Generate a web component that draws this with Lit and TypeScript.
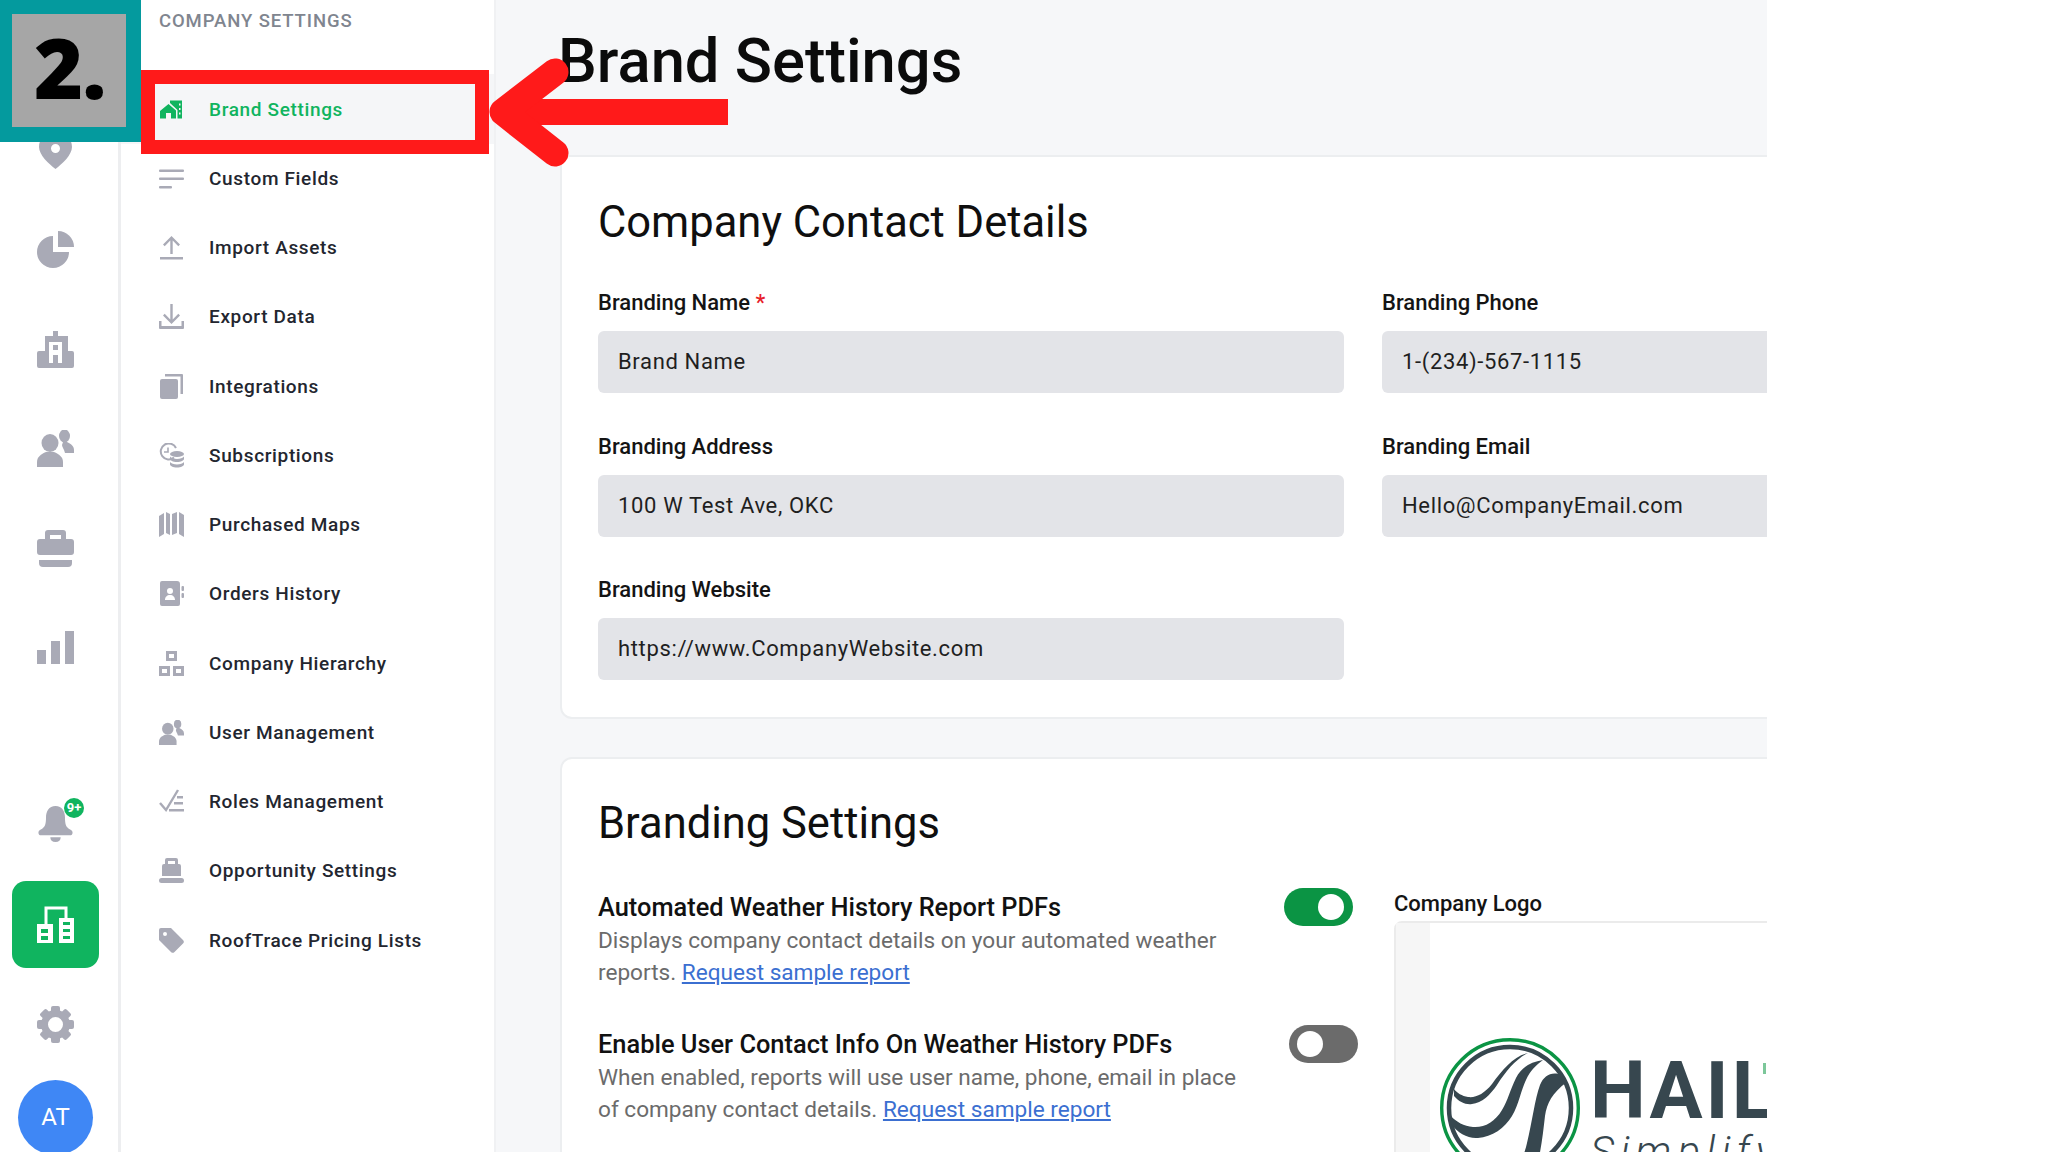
import { LitElement, html, svg, css } from 'lit';
import { customElement } from 'lit/decorators.js';

const G = '#a9aab6';

const usersIcon = svg`<ellipse cx="13" cy="13" rx="8.500" ry="9"/><path d="M0 37v-5c0-5 4-8 9-10h8c5 2 9 5 9 10v5z"/><ellipse cx="27.500" cy="6" rx="5.500" ry="6.500"/><path d="M26 12h4c4 2 7 4 7 8v3h-9c-1-4-3-6-3-8z"/>`;

const railIcons = {
  pin: svg`<path fill-rule="evenodd" d="M18.5 0C8 0 2 7 2 15c0 8 10 17 16.5 22C25 32 35 23 35 15 35 7 29 0 18.5 0zm0 12a4.5 4.5 0 1 1 0 9 4.5 4.5 0 0 1 0-9z"/>`,
  pie: svg`<path d="M16 5A16 16 0 1 0 32 21H16z"/><path d="M21 0a16 16 0 0 1 16 16H21z"/>`,
  building: svg`<path fill-rule="evenodd" d="M16 0h5v5h10v15h4a2 2 0 0 1 2 2v13a2 2 0 0 1-2 2H2a2 2 0 0 1-2-2V22a2 2 0 0 1 2-2h6V5h8zM12 11v21h4v-8h5v8h4V11zm4 3h5v5h-5z"/>`,
  users: usersIcon,
  case: svg`<path fill-rule="evenodd" d="M11 0h15a3 3 0 0 1 3 3v6h5a3 3 0 0 1 3 3v10a3 3 0 0 1-3 3H3a3 3 0 0 1-3-3V12a3 3 0 0 1 3-3h5V3a3 3 0 0 1 3-3zm2 5v4h11V5z"/><path d="M2 30h33v3a4 4 0 0 1-4 4H6a4 4 0 0 1-4-4z"/>`,
  bars: svg`<rect y="21" width="9" height="14"/><rect x="14" y="12" width="9" height="23"/><rect x="28" y="2" width="9" height="33"/>`,
  bell: svg`<path d="M18.5 1c-7 0-10 6-10 12 0 7-1 10-4 12-2 1-4 2-4 4 0 2 1 3 3 3h30c2 0 3-1 3-3 0-2-2-3-4-4-3-2-4-5-4-12 0-6-3-12-10-12z"/><path d="M13 34h11c0 3-2 5-5.500 5S13 37 13 34z"/>`,
};

const teeth = [0, 45, 90, 135, 180, 225, 270, 315];

const navIcons = {
  brand: svg`<path d="M1 14 9.500 7 17 13.500v8h-5V16H7v5.500H1z"/><path fill-rule="evenodd" d="M11 3.500h12v18h-4.500V13L11 6zM20 6.500v2h1.500v-2zm0 4.500v2h1.500v-2zm0 4.500v2h1.500v-2z"/>`,
  fields: svg`<rect y="3.500" width="25" height="2.600" rx="1"/><rect y="11.500" width="25" height="2.600" rx="1"/><rect y="20" width="13" height="2.600" rx="1"/>`,
  upload: svg`<path d="M12.500 1 21 9.500l-1.700 1.700-5.600-5.600V19h-2.400V5.600l-5.600 5.600L4 9.500z"/><rect x="1" y="22" width="23" height="2.500"/>`,
  download: svg`<path d="M12.500 20 21 11.500l-1.700-1.700-5.600 5.600V0h-2.400v15.400L5.700 9.800 4 11.500z"/><path d="M0 17h2.500v5h20v-5H25v7a1 1 0 0 1-1 1H1a1 1 0 0 1-1-1z"/>`,
  pages: svg`<rect x="1" y="5" width="18" height="20" rx="2"/><path d="M6 0h17a1 1 0 0 1 1 1v19h-2.500V2.500H6z"/>`,
  subs: svg`<path fill="none" stroke="${G}" stroke-width="2" d="M15 14.500A8 8 0 1 1 17 5"/><path fill="none" stroke="${G}" stroke-width="1.600" d="M9 4.500V9H5"/><ellipse cx="18" cy="11" rx="7" ry="3"/><path d="M11 13.500c1 1.500 4 2.500 7 2.500s6-1 7-2.500V16c0 1.500-3 3-7 3s-7-1.500-7-3z"/><path d="M11 19c1 1.500 4 2.500 7 2.500s6-1 7-2.500v2.500c0 1.500-3 3-7 3s-7-1.500-7-3z"/>`,
  maps: svg`<path d="M0 4 5 1v21l-5 3z"/><path d="M7 0l4 2v21l-4-2z"/><path d="M13 2l5-2v21l-5 2z"/><path d="M20 0l5 3v22l-5-3z"/>`,
  book: svg`<path fill-rule="evenodd" d="M3 0h15a3 3 0 0 1 3 3v20a2 2 0 0 1-2 2H3a2 2 0 0 1-2-2V2a2 2 0 0 1 2-2zm8 7a3 3 0 1 0 0 6 3 3 0 0 0 0-6zm-5 12h10c0-3-2-5-5-5s-5 2-5 5z"/><rect x="22.500" y="5" width="2.500" height="5" rx="1"/><rect x="22.500" y="12" width="2.500" height="5" rx="1"/>`,
  tree: svg`<path fill-rule="evenodd" d="M7 0h11v10H7zm3 3v4h5V3zM0 15h11v10H0zm3 3v4h5v-4zM14 15h11v10H14zm3 3v4h5v-4z"/>`,
  users: usersIcon,
  roles: svg`<path fill="none" stroke="${G}" stroke-width="2.400" d="M1 14l6 7L19 1"/><rect x="18" y="7" width="6" height="2.500"/><rect x="15" y="13" width="9" height="2.500"/><rect x="10" y="20" width="15" height="2.500"/>`,
  lock: svg`<path fill-rule="evenodd" d="M8 0h9a2 2 0 0 1 2 2v4h1a2 2 0 0 1 2 2v10H3V8a2 2 0 0 1 2-2h1V2a2 2 0 0 1 2-2zm1 3v3h7V3z"/><rect y="20" width="25" height="5" rx="2.500"/>`,
  tag: svg`<path fill-rule="evenodd" d="M2 0h10l12 12a2.500 2.500 0 0 1 0 3.500L15.500 24a2.500 2.500 0 0 1-3.500 0L0 12V2a2 2 0 0 1 2-2zm4 4a2 2 0 1 0 0 4 2 2 0 0 0 0-4z"/>`,
};

const NAV: [string, keyof typeof navIcons][] = [
  ['Brand Settings', 'brand'],
  ['Custom Fields', 'fields'],
  ['Import Assets', 'upload'],
  ['Export Data', 'download'],
  ['Integrations', 'pages'],
  ['Subscriptions', 'subs'],
  ['Purchased Maps', 'maps'],
  ['Orders History', 'book'],
  ['Company Hierarchy', 'tree'],
  ['User Management', 'users'],
  ['Roles Management', 'roles'],
  ['Opportunity Settings', 'lock'],
  ['RoofTrace Pricing Lists', 'tag'],
];

@customElement('app-root')
export class AppRoot extends LitElement {
  static styles = css`
    :host {
      display: block;
      position: relative;
      width: 2048px;
      height: 1152px;
      overflow: hidden;
      background: #fff;
      font-family: Roboto, 'Liberation Sans', sans-serif;
      color: #111;
    }
    .page { display: flex; height: 1152px; }

    .rail {
      width: 111px;
      padding-right: 7px;
      flex-shrink: 0;
      border-right: 3px solid #edeef0;
      display: flex;
      flex-direction: column;
      align-items: center;
      padding-top: 131.5px;
      box-sizing: content-box;
      height: calc(1152px - 131.5px);
      overflow: hidden;
    }
    .rail-top { display: flex; flex-direction: column; gap: 62.5px; }
    .rail-bottom {
      margin-top: auto;
      margin-bottom: -3px;
      display: flex;
      flex-direction: column;
      align-items: center;
    }
    .ri { width: 37px; height: 37px; fill: #a9aab6; display: block; }
    .bell { position: relative; margin-bottom: 39.5px; }
    .badge {
      position: absolute;
      left: 27px;
      top: -7px;
      width: 20px;
      height: 20px;
      border-radius: 50%;
      background: #10b45f;
      color: #fff;
      font-size: 13px;
      font-weight: 700;
      line-height: 20px;
      text-align: center;
    }
    .active-box {
      width: 87px;
      height: 87px;
      border-radius: 14px;
      background: #10b45f;
      display: flex;
      align-items: center;
      justify-content: center;
      margin-bottom: 37.5px;
    }
    .gear { margin-bottom: 37.5px; }
    .avatar {
      width: 75px;
      height: 75px;
      border-radius: 50%;
      background: #3f87f5;
      color: #fff;
      font-size: 24px;
      line-height: 75px;
      text-align: center;
    }

    .sub {
      width: 373px;
      flex-shrink: 0;
      border-right: 2px solid #f0f1f3;
    }
    .sub-head {
      height: 74.4px;
      box-sizing: border-box;
      padding: 9px 38px 0;
      font-size: 18.5px;
      line-height: 24px;
      font-weight: 500;
      letter-spacing: 0.9px;
      color: #80858f;
    }
    .row {
      height: 69.25px;
      display: flex;
      align-items: center;
      gap: 25px;
      padding-left: 38px;
      font-size: 19px;
      font-weight: 500;
      letter-spacing: 0.65px;
      color: #23262f;
    }
    .row.on { background: #f5f6f8; color: #10b45f; }
    .ni { width: 25px; height: 25px; fill: #a9aab6; flex-shrink: 0; }
    .row.on .ni { fill: #10b45f; }

    .main {
      width: 1271px;
      flex-shrink: 0;
      background: #f6f7f9;
      overflow: hidden;
      padding-left: 64px;
      box-sizing: border-box;
    }
    .title {
      height: 155px;
      box-sizing: border-box;
      padding-top: 26px;
      margin: 0 0 0 -2px;
      font-size: 61.5px;
      line-height: 70px;
      font-weight: 500;
      color: #0b0b0b;
    }
    .card {
      width: 1600px;
      background: #fff;
      border: 2px solid #eceef0;
      box-sizing: border-box;
      padding: 41px 36px 37px;
    }
    .card.one { border-bottom-left-radius: 12px; margin-bottom: 38px; }
    .card.two {
      border-top-left-radius: 12px;
      padding-top: 40px;
      display: flex;
      height: 420px;
    }
    h2 {
      margin: 0;
      font-size: 43.5px;
      line-height: 50px;
      font-weight: 400;
      color: #0f0f0f;
    }
    .form {
      margin-top: 42px;
      display: grid;
      grid-template-columns: 746px 746px;
      column-gap: 38px;
      row-gap: 40.5px;
    }
    .label {
      font-size: 22px;
      line-height: 26px;
      font-weight: 500;
      color: #141414;
    }
    .req { color: #e8202a; }
    .input {
      margin-top: 15px;
      height: 62px;
      border-radius: 6px;
      background: #e3e4e8;
      padding-left: 20px;
      font-size: 22px;
      line-height: 62px;
      letter-spacing: 0.65px;
      color: #1f1f1f;
    }
    .left { width: 796px; flex-shrink: 0; }
    .opt { display: grid; align-items: start; margin-top: 45px; }
    .opt.a { grid-template-columns: 686px 69px; }
    .opt.b { grid-template-columns: 691px 69px; margin-top: 42px; }
    .opt-title {
      font-size: 25.4px;
      line-height: 26px;
      font-weight: 500;
      color: #111;
    }
    .opt-desc {
      margin-top: 5px;
      font-size: 22.6px;
      line-height: 32px;
      color: #6b6b6b;
    }
    .opt-desc a { color: #3b6fd1; text-decoration: underline; }
    .toggle {
      width: 69px;
      height: 38px;
      border-radius: 19px;
      display: flex;
      align-items: center;
      padding: 0 8px;
      box-sizing: border-box;
      margin-top: -6px;
    }
    .toggle i {
      width: 26px;
      height: 26px;
      border-radius: 50%;
      background: #fff;
      display: block;
    }
    .toggle.on { background: #0b9444; justify-content: flex-end; padding-right: 9px; }
    .toggle.off { background: #6b6b6b; }
    .logo-col { margin-top: 92px; width: 500px; }
    .logo-box {
      margin-top: 4px;
      height: 400px;
      border: 2px solid #ebebeb;
      border-radius: 8px 0 0 0;
      display: flex;
    }
    .strip { width: 34px; background: #f6f6f6; }
    .logo {
      padding: 115px 0 0 10px;
      display: flex;
      gap: 10px;
      color: #37474f;
    }
    .logo-words { padding-top: 22px; }
    .hail {
      position: relative;
      font-size: 79px;
      font-weight: 700;
      line-height: 62px;
      height: 62px;
      letter-spacing: 3px;
    }
    .hail i {
      position: absolute;
      left: 173px;
      top: 3px;
      width: 3px;
      height: 11px;
      background: #7cc79a;
    }
    .simplify {
      font-size: 42px;
      font-weight: 300;
      font-style: italic;
      letter-spacing: 6px;
      line-height: 60px;
    }

    .step {
      position: absolute;
      left: 0;
      top: 0;
      width: 141px;
      height: 142px;
      box-sizing: border-box;
      border: solid #049a9e;
      border-width: 14px 15px 15px 12px;
      background: #a6a6a6;
      color: #000;
      font-family: 'Open Sans', sans-serif;
      font-weight: 800;
      font-size: 84px;
      line-height: 106px;
      padding-left: 22px;
      letter-spacing: -1px;
    }
    .mark {
      position: absolute;
      left: 141px;
      top: 70px;
      width: 348px;
      height: 84px;
      box-sizing: border-box;
      border: 14px solid #ff1a1a;
    }
    .arrow { position: absolute; left: 480px; top: 50px; }
  `;

  render() {
    return html`
      <div class="page">
        <aside class="rail">
          <div class="rail-top">
            ${Object.values(railIcons).slice(0, 6).map(p => html`<svg class="ri" viewBox="0 0 37 37">${p}</svg>`)}
          </div>
          <div class="rail-bottom">
            <div class="bell">
              <svg class="ri" viewBox="0 0 37 39">${railIcons.bell}</svg>
              <span class="badge">9+</span>
            </div>
            <div class="active-box">
              <svg width="37" height="37" viewBox="0 0 37 37">
                <path fill="none" stroke="#fff" stroke-width="3" d="M9 18V2h20v10"/>
                <path fill="#fff" fill-rule="evenodd" d="M0 18h16v19H0zM4 23v4h7v-4zm0 7v4h7v-4zM22 12h15v25H22zM26 16v3h7v-3zm0 7v3h7v-3zm0 7v3h7v-3z"/>
              </svg>
            </div>
            <svg class="ri gear" viewBox="-18.500 -18.500 37 37">
              ${teeth.map(a => svg`<rect x="-4.500" y="-18.500" width="9" height="8" rx="2" transform="rotate(${a})"/>`)}
              <circle r="11" fill="none" stroke="${G}" stroke-width="7"/>
            </svg>
            <div class="avatar">AT</div>
          </div>
        </aside>

        <nav class="sub">
          <div class="sub-head">COMPANY SETTINGS</div>
          ${NAV.map(([name, icon], i) => html`
            <div class="row ${i === 0 ? 'on' : ''}">
              <svg class="ni" viewBox="0 0 ${icon === 'users' ? 37 : 25} ${icon === 'users' ? 37 : 25}">${navIcons[icon]}</svg>
              <span>${name}</span>
            </div>`)}
        </nav>

        <main class="main">
          <h1 class="title">Brand Settings</h1>

          <section class="card one">
            <h2>Company Contact Details</h2>
            <div class="form">
              <div><div class="label">Branding Name <span class="req">*</span></div><div class="input">Brand Name</div></div>
              <div><div class="label">Branding Phone</div><div class="input">1-(234)-567-1115</div></div>
              <div><div class="label">Branding Address</div><div class="input">100 W Test Ave, OKC</div></div>
              <div><div class="label">Branding Email</div><div class="input">Hello@CompanyEmail.com</div></div>
              <div><div class="label">Branding Website</div><div class="input">https://www.CompanyWebsite.com</div></div>
            </div>
          </section>

          <section class="card two">
            <div class="left">
              <h2>Branding Settings</h2>
              <div class="opt a">
                <div>
                  <div class="opt-title">Automated Weather History Report PDFs</div>
                  <div class="opt-desc">Displays company contact details on your automated weather<br>reports. <a>Request sample report</a></div>
                </div>
                <div class="toggle on"><i></i></div>
              </div>
              <div class="opt b">
                <div>
                  <div class="opt-title">Enable User Contact Info On Weather History PDFs</div>
                  <div class="opt-desc">When enabled, reports will use user name, phone, email in place<br>of company contact details. <a>Request sample report</a></div>
                </div>
                <div class="toggle off"><i></i></div>
              </div>
            </div>
            <div class="logo-col">
              <div class="label">Company Logo</div>
              <div class="logo-box">
                <div class="strip"></div>
                <div class="logo">
                  <svg width="140" height="140" viewBox="0 0 140 140">
                    <circle cx="70" cy="70" r="68.300" fill="none" stroke="#0b9444" stroke-width="3.400"/>
                    <circle cx="70" cy="70" r="61" fill="none" stroke="#37474f" stroke-width="4.500"/>
                    <path fill="#37474f" d="M88 15C74 18 62 32 52 46 44 56 36 60 28 59 22 58 17 55 14 51L14 58C19 64 26 67 32 66 42 65 50 57 57 47 66 33 76 21 88 15Z"/>
                    <path fill="#37474f" d="M103 22C90 24 81 30 76 40 70 52 68 62 62 72 55 84 44 90 33 89 24 88 16 84 11 78L11 86C18 95 28 101 38 100 52 99 65 90 72 78 79 66 81 52 86 42 90 33 96 27 103 22Z"/>
                    <path fill="#37474f" d="M122 37C112 33 104 37 100 47 95 60 92 85 87 105 85 115 80 125 76 132L96 130C101 115 103 95 105 78 107 65 112 55 127 44Z"/>
                  </svg>
                  <div class="logo-words">
                    <div class="hail">HAIL<i></i></div>
                    <div class="simplify">Simplify</div>
                  </div>
                </div>
              </div>
            </div>
          </section>
        </main>
      </div>

      <div class="step">2.</div>
      <div class="mark"></div>
      <svg class="arrow" width="250" height="120" viewBox="480 50 250 120">
        <rect x="500" y="99" width="228" height="26" fill="#ff1a1a"/>
        <path d="M555 72 503 112l52 41" fill="none" stroke="#ff1a1a" stroke-width="27" stroke-linecap="round" stroke-linejoin="round"/>
      </svg>
    `;
  }
}
